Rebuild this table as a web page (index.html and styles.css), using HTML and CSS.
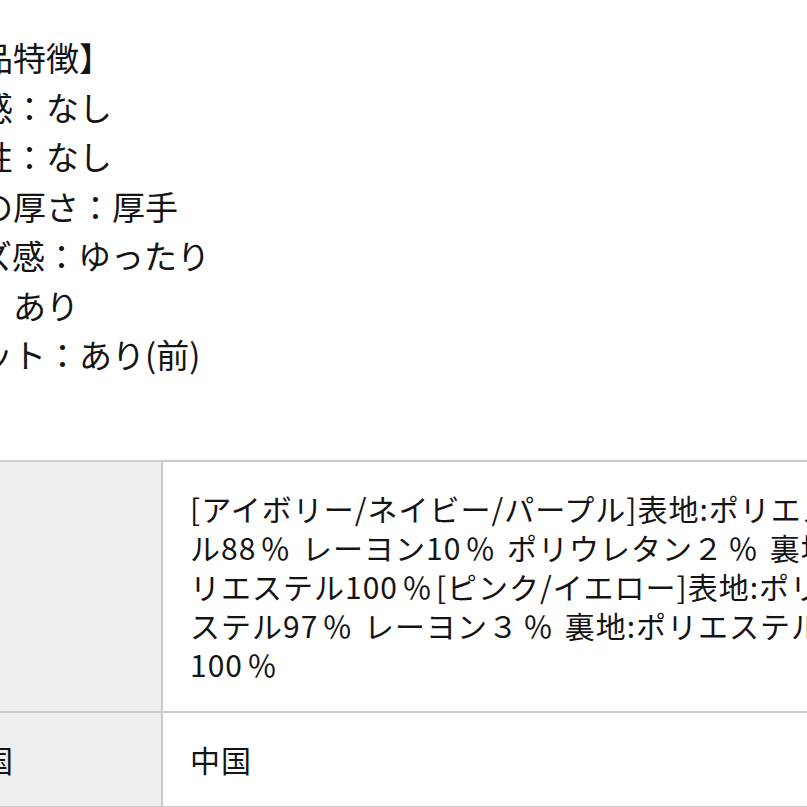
FILE: index.html
```html
<!DOCTYPE html>
<html lang="ja">
<head>
<meta charset="utf-8">
<title>商品特徴</title>
<link rel="stylesheet" href="styles.css">
</head>
<body>
<div class="page">
  <ul class="features">
    <li>【商品特徴】</li>
    <li>透け感：なし</li>
    <li>伸縮性：なし</li>
    <li>生地の厚さ：厚手</li>
    <li>サイズ感：ゆったり</li>
    <li>裏地：あり</li>
    <li>ポケット：あり(前)</li>
  </ul>
  <table class="spec">
    <tr class="spec-row spec-row--tall">
      <th class="spec-label">素材</th>
      <td class="spec-value">[アイボリー/ネイビー/パープル]表地:ポリエステ<br>ル88<span class="pct">％</span> レーヨン10<span class="pct">％</span> ポリウレタン２<span class="pct">％</span> 裏地:ポ<br>リエステル100<span class="pct">％</span>[ピンク/イエロー]表地:ポリエ<br>ステル97<span class="pct">％</span> レーヨン３<span class="pct">％</span> 裏地:ポリエステル<br>100<span class="pct">％</span></td>
    </tr>
    <tr class="spec-row">
      <th class="spec-label">原産国</th>
      <td class="spec-value">中国</td>
    </tr>
  </table>
</div>
</body>
</html>
```

FILE: styles.css
```css
html, body {
  margin: 0;
  padding: 0;
  overflow: hidden;
  background: #ffffff;
}

body {
  font-family: "Noto Sans CJK JP", "Noto Sans", sans-serif;
  color: #141414;
}

.page {
  margin-left: -106px;
  width: 1300px;
  padding-top: 33px;
}

.features {
  list-style: none;
  margin: 0;
  padding: 0 0 0 20px;
  font-size: 33px;
  line-height: 49.5px;
}

.spec {
  margin-top: 80px;
  border-collapse: collapse;
  width: 1300px;
  font-size: 30px;
  line-height: 39px;
}

.spec-label,
.spec-value {
  border: 2px solid #cbcbcb;
  padding: 27px 27px;
  font-weight: 400;
  text-align: left;
}

.spec-label {
  width: 211px;
  background: #efefef;
  vertical-align: middle;
}

.spec-value {
  background: #ffffff;
  vertical-align: middle;
  white-space: nowrap;
  letter-spacing: 1px;
}

.pct {
  padding: 0 3px 0 4px;
}
```
